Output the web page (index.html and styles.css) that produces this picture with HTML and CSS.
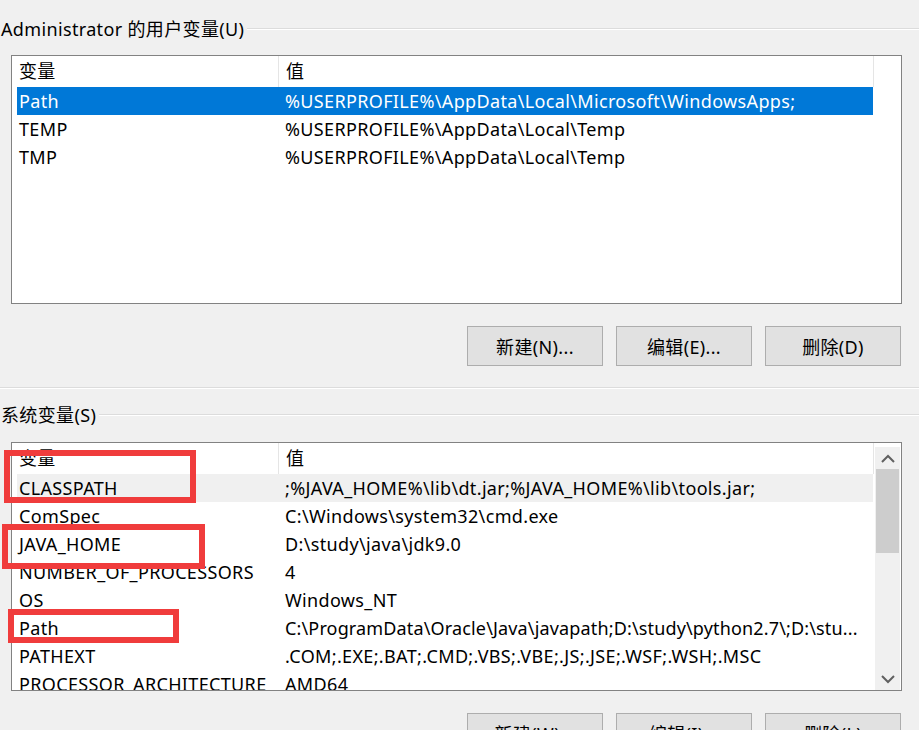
FILE: index.html
```html
<!DOCTYPE html>
<html lang="zh-CN">
<head>
<meta charset="utf-8">
<title>环境变量</title>
<link rel="stylesheet" href="styles.css">
</head>
<body>
<div class="page">
  <div class="group-title t1"><span class="gt-text">Administrator 的用户变量(U)</span><span class="gt-line"></span></div>
  <div class="listbox">
    <div class="lv">
      <div class="lv-head">
        <div class="hc c1">变量</div>
        <div class="hc c2">值</div>
      </div>
      <div class="row sel"><div class="cell k">Path</div><div class="cell v">%USERPROFILE%\AppData\Local\Microsoft\WindowsApps;</div></div>
      <div class="row"><div class="cell k">TEMP</div><div class="cell v">%USERPROFILE%\AppData\Local\Temp</div></div>
      <div class="row"><div class="cell k">TMP</div><div class="cell v">%USERPROFILE%\AppData\Local\Temp</div></div>
    </div>
  </div>
  <div class="btn-row">
    <div class="btn">新建(N)...</div>
    <div class="btn">编辑(E)...</div>
    <div class="btn">删除(D)</div>
  </div>
  <div class="sep"></div>
  <div class="group-title t2"><span class="gt-text">系统变量(S)</span><span class="gt-line"></span></div>
  <div class="listbox lb2">
    <div class="lv">
      <div class="lv-head">
        <div class="hc c1">变量</div>
        <div class="hc c2">值</div>
      </div>
      <div class="row hov"><div class="cell k">CLASSPATH</div><div class="cell v">;%JAVA_HOME%\lib\dt.jar;%JAVA_HOME%\lib\tools.jar;</div></div>
      <div class="row"><div class="cell k">ComSpec</div><div class="cell v">C:\Windows\system32\cmd.exe</div></div>
      <div class="row"><div class="cell k">JAVA_HOME</div><div class="cell v">D:\study\java\jdk9.0</div></div>
      <div class="row"><div class="cell k">NUMBER_OF_PROCESSORS</div><div class="cell v">4</div></div>
      <div class="row"><div class="cell k">OS</div><div class="cell v">Windows_NT</div></div>
      <div class="row"><div class="cell k">Path</div><div class="cell v tight">C:\ProgramData\Oracle\Java\javapath;D:\study\python2.7\;D:\stu...</div></div>
      <div class="row"><div class="cell k">PATHEXT</div><div class="cell v">.COM;.EXE;.BAT;.CMD;.VBS;.VBE;.JS;.JSE;.WSF;.WSH;.MSC</div></div>
      <div class="row"><div class="cell k">PROCESSOR_ARCHITECTURE</div><div class="cell v">AMD64</div></div>
    </div>
    <div class="scrollbar">
      <div class="sb-arrow">
        <svg width="14" height="9" viewBox="0 0 14 9"><path d="M1 8 L7 2 L13 8" fill="none" stroke="#606060" stroke-width="2"/></svg>
      </div>
      <div class="sb-track"><div class="sb-thumb"></div></div>
      <div class="sb-arrow">
        <svg width="14" height="9" viewBox="0 0 14 9"><path d="M1 1 L7 7 L13 1" fill="none" stroke="#606060" stroke-width="2"/></svg>
      </div>
    </div>
  </div>
  <div class="btn-row b2">
    <div class="btn">新建(W)...</div>
    <div class="btn">编辑(I)...</div>
    <div class="btn">删除(L)</div>
  </div>

  <div class="mark m1"></div>
  <div class="mark m2"></div>
  <div class="mark m3"></div>
</div>
</body>
</html>
```
FILE: styles.css
```css
html, body {
  margin: 0;
  padding: 0;
  background: #f0f0f0;
}
body {
  width: 919px;
  height: 730px;
  overflow: hidden;
  font-family: "Noto Sans", "Noto Sans CJK SC", sans-serif;
  font-size: 18px;
  letter-spacing: 0.35px;
  color: #000;
}
.page {
  position: relative;
  display: flex;
  flex-direction: column;
}
.group-title {
  display: flex;
  align-items: center;
  height: 20px;
  white-space: nowrap;
}
.t1 { margin-top: 19px; }
.t2 { margin-top: 16px; }
.gt-text { padding-left: 1px; line-height: 20px; }
.gt-line {
  flex: 1;
  height: 0;
  border-top: 1px solid #dcdcdc;
  border-bottom: 1px solid #fff;
  margin-left: 3px;
}
.listbox {
  margin-left: 11px;
  margin-top: 16px;
  width: 889px;
  height: 247px;
  border: 1px solid #828282;
  background: #fff;
  display: flex;
  overflow: hidden;
}
.lb2 { margin-top: 17px; }
.lv {
  width: 862px;
  flex: none;
  display: flex;
  flex-direction: column;
}
.lv-head {
  display: flex;
  height: 31px;
  flex: none;
}
.hc {
  height: 31px;
  line-height: 31px;
  padding-left: 7px;
  box-sizing: border-box;
  border-right: 1px solid #e5e5e5;
}
.hc.c1 { width: 267px; }
.hc.c2 { width: 595px; }
.row {
  display: flex;
  height: 28px;
  flex: none;
  margin-left: 5px;
  width: 856px;
  line-height: 28px;
  white-space: nowrap;
}
.row.sel { background: #0078d7; color: #fff; }
.row.hov { background: #f0f0f0; }
.cell.k { width: 261px; padding-left: 2px; box-sizing: border-box; }
.cell.v { padding-left: 7px; }
.cell.tight { letter-spacing: 0.15px; }
.scrollbar {
  width: 25px;
  margin-left: 1px;
  margin-top: 4px;
  flex: none;
  display: flex;
  flex-direction: column;
  background: #f0f0f0;
}
.sb-arrow {
  height: 22px;
  display: flex;
  align-items: center;
  justify-content: center;
  flex: none;
}
.sb-track {
  flex: 1;
  display: flex;
  flex-direction: column;
}
.sb-thumb {
  height: 84px;
  margin: 0 1px;
  background: #cdcdcd;
}
.btn-row {
  display: flex;
  justify-content: flex-end;
  gap: 13px;
  padding-right: 18px;
  margin-top: 22px;
}
.btn {
  width: 134px;
  height: 38px;
  border: 1px solid #adadad;
  background: #e1e1e1;
  display: flex;
  align-items: center;
  justify-content: center;
  white-space: nowrap;
}
.sep {
  margin-top: 21px;
  height: 0;
  border-top: 1px solid #dcdcdc;
  border-bottom: 1px solid #fff;
}
.mark {
  position: absolute;
  border: 6px solid #f03c3c;
  box-sizing: border-box;
}
.m1 { left: 4px; top: 450px; width: 192px; height: 53px; }
.m2 { left: 2px; top: 524px; width: 203px; height: 45px; }
.m3 { left: 8px; top: 609px; width: 171px; height: 34px; }
```
